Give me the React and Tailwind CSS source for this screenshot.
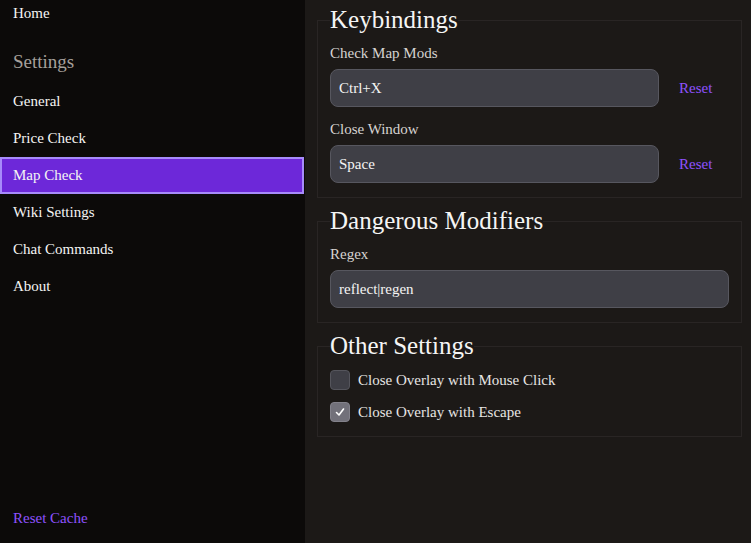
import React, { useState } from 'react';

const navItems = ['General', 'Price Check', 'Map Check', 'Wiki Settings', 'Chat Commands', 'About'];

const font = { fontFamily: '"Liberation Serif", serif' };

const KeyInput = ({ label, value }) => (
  <div>
    <label className="block text-[15px] leading-5 text-stone-300 mb-1.5">{label}</label>
    <div className="flex items-center">
      <input
        type="text"
        defaultValue={value}
        className="w-[329px] h-[38px] px-2 rounded-lg bg-[#3f3f46] border border-[#57575f] text-[15px] text-stone-100 outline-none"
      />
      <button className="ml-5 text-[15px] text-violet-500">Reset</button>
    </div>
  </div>
);

const Section = ({ title, children }) => (
  <fieldset className="border border-stone-800 px-3 pb-[14px] mb-[7px]">
    <legend className="text-[25px] leading-8 text-stone-100">{title}</legend>
    <div className="pt-[7px]">{children}</div>
  </fieldset>
);

const Check = ({ label, checked }) => {
  const [on, setOn] = useState(checked);
  return (
    <label className="flex items-center h-5 cursor-pointer" onClick={() => setOn(!on)}>
      <span
        className={`w-5 h-5 rounded border flex items-center justify-center ${
          on ? 'bg-[#72717a] border-[#83828b]' : 'bg-[#3f3f46] border-[#55555c]'
        }`}
      >
        {on && (
          <svg width="10" height="10" viewBox="0 0 10 10" fill="none">
            <path d="M1.5 5.5 L4 8 L8.5 2" stroke="white" strokeWidth="1.6" strokeLinecap="round" strokeLinejoin="round" />
          </svg>
        )}
      </span>
      <span className="ml-2 text-[15px] text-stone-200">{label}</span>
    </label>
  );
};

export default function App() {
  return (
    <div className="flex w-[751px] h-[543px] overflow-hidden" style={font}>
      {/* Sidebar */}
      <aside className="w-[305px] shrink-0 bg-[#0c0a09] flex flex-col pb-[14px]">
        <div className="px-[13px] pt-[3px] text-[15px] leading-5 text-stone-100">Home</div>
        <div className="px-[13px] mt-[27px] text-[19px] leading-6 text-stone-400">Settings</div>
        <nav className="mt-[9px] flex flex-col">
          {navItems.map((item) => (
            <div
              key={item}
              className={`h-[37px] flex items-center text-[15px] text-stone-100 ${
                item === 'Map Check'
                  ? 'bg-[#6d28d9] border-2 border-[#a78bfa] px-[11px] mr-px'
                  : 'px-[13px]'
              }`}
            >
              {item}
            </div>
          ))}
        </nav>
        <div className="mt-auto px-[13px] text-[15px] text-violet-500">Reset Cache</div>
      </aside>

      {/* Main */}
      <main className="flex-1 bg-[#1c1917] pl-3 pr-[9px] pt-1">
        <Section title="Keybindings">
          <div className="flex flex-col gap-3">
            <KeyInput label="Check Map Mods" value="Ctrl+X" />
            <KeyInput label="Close Window" value="Space" />
          </div>
        </Section>

        <Section title="Dangerous Modifiers">
          <label className="block text-[15px] leading-5 text-stone-300 mb-1.5">Regex</label>
          <input
            type="text"
            defaultValue="reflect|regen"
            className="w-full h-[38px] px-2 rounded-lg bg-[#3f3f46] border border-[#57575f] text-[15px] text-stone-100 outline-none"
          />
        </Section>

        <Section title="Other Settings">
          <div className="flex flex-col gap-3 pt-[1px]">
            <Check label="Close Overlay with Mouse Click" checked={false} />
            <Check label="Close Overlay with Escape" checked={true} />
          </div>
        </Section>
      </main>
    </div>
  );
}
